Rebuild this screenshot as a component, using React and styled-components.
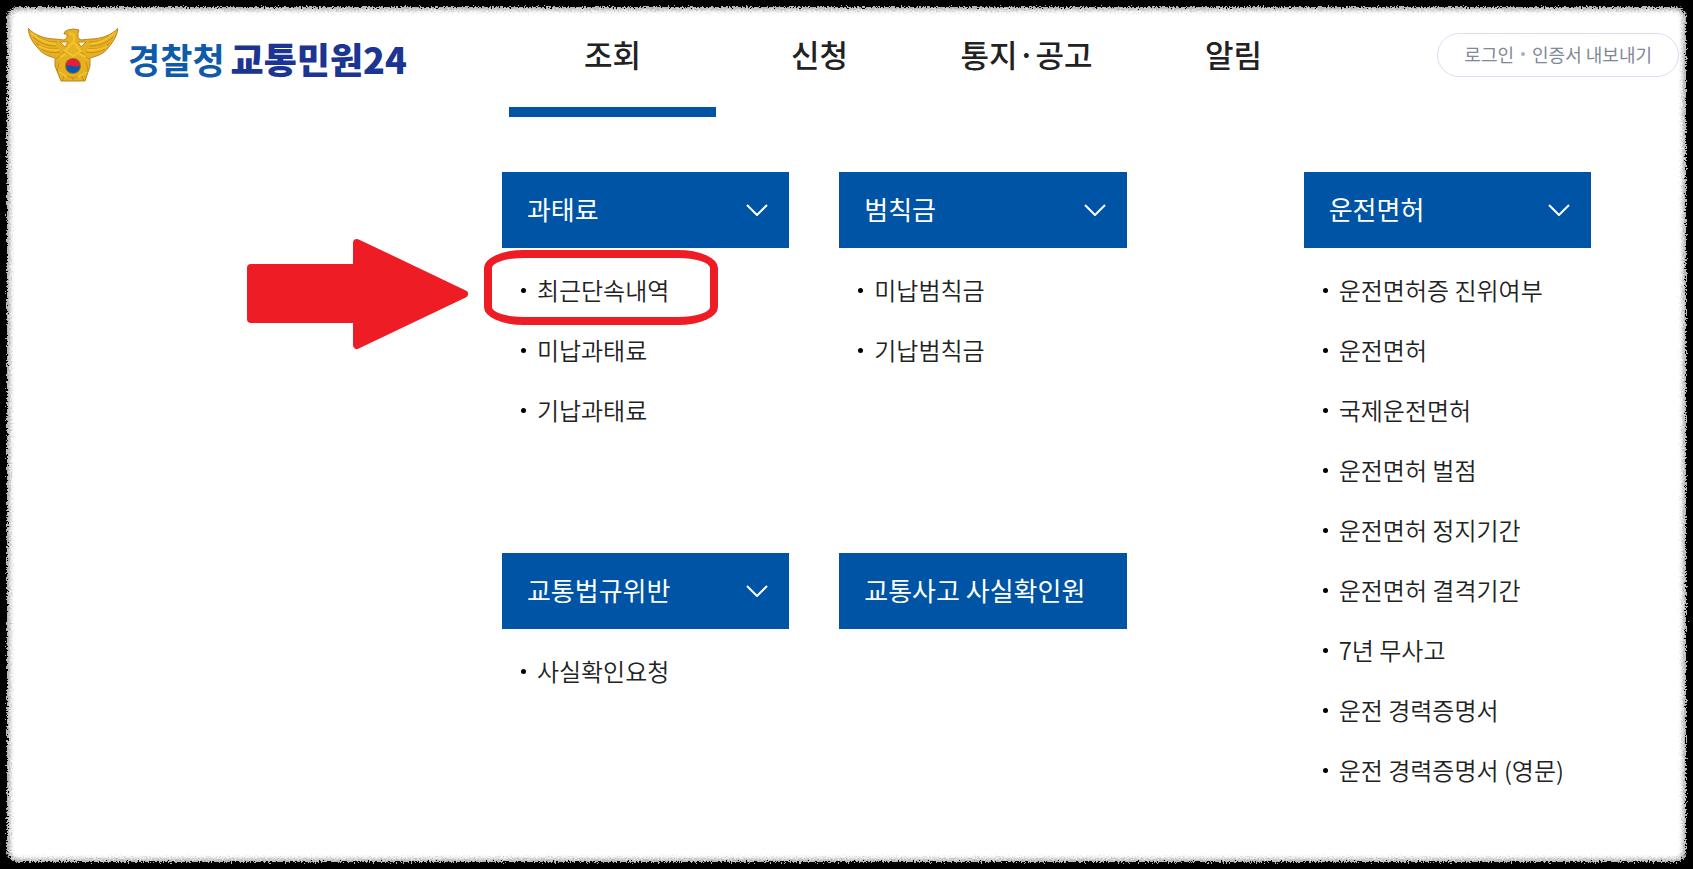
import React from "react"
import styled, { createGlobalStyle } from "styled-components"

const Colors = {
    blue: '#0054a6',
    text: '#222',
    red: '#ee1c24',
    muted: '#808899',
    line: '#dcdff0'
}

const GlobalStyle = createGlobalStyle`
    * {
        box-sizing: border-box;
    }

    body {
        margin: 0;
        background-color: black;
        font-family: 'Noto Sans CJK KR', 'Noto Sans', sans-serif;
        color: ${Colors.text};
    }

    a {
        color: inherit;
        text-decoration: none;
    }

    ul {
        list-style: none;
        margin: 0;
        padding: 0;
    }
`

const Page = styled.div`
    position: relative;
    min-height: 100vh;
    padding: 8px;
    background-color: white;
    overflow: hidden;
`

const RoughFrame = styled.div`
    position: absolute;
    inset: -12px;
    border: 19px solid black;
    border-radius: 30px;
    box-shadow: inset 0 0 4px 3px #aaa;
    filter: url(#rough);
    pointer-events: none;
`

const Header = styled.header`
    display: grid;
    grid-template-columns: 501fr 828fr 348fr;
    height: 109px;
`

const Brand = styled.a`
    display: flex;
    align-items: flex-start;
    gap: 10px;
    padding: 20px 0 0 20px;
    white-space: nowrap;
`

const BrandName = styled.span`
    display: flex;
    align-items: center;
    gap: 6px;
    height: 60px;
    font-size: 35px;
    font-weight: 700;
    color: #0f5aaa;

    strong {
        font-size: 36px;
        color: #1c3492;
    }
`

const Nav = styled.nav`
    display: grid;
    grid-template-columns: repeat(4, 1fr);
`

const NavLink = styled.a`
    display: flex;
    justify-content: center;
    padding-top: 22px;
    border-bottom: 10px solid ${props => props.$active ? Colors.blue : 'transparent'};
    font-size: 31px;
    font-weight: 500;
    line-height: 48px;
    white-space: nowrap;
`

const Utility = styled.div`
    display: flex;
    justify-content: flex-end;
    align-items: flex-start;
    padding: 25px 6px 0 0;
`

const Pill = styled.div`
    display: flex;
    align-items: center;
    gap: 7px;
    height: 44px;
    padding: 0 26px 2px;
    border: 1px solid ${Colors.line};
    border-radius: 22px;
    color: ${Colors.muted};
    font-size: 18px;
    white-space: nowrap;
`

const Dot = styled.i`
    width: 4px;
    height: 4px;
    border-radius: 50%;
    background-color: #a3b1c6;
`

const Menu = styled.main`
    display: flex;
    gap: 177px;
    padding: 55px 5.6% 0 29.45%;
`

const MenuGroup = styled.div`
    display: grid;
    grid-template-columns: repeat(${props => props.$columns}, 1fr);
    grid-template-rows: minmax(331px, auto);
    align-content: start;
    gap: 50px;
    flex: ${props => props.$columns === 2 ? 626 : 288} 1 0;
`

const Toggle = styled.button`
    display: flex;
    justify-content: space-between;
    align-items: center;
    width: 100%;
    height: 76px;
    padding: 0 21px 3px 25px;
    border: 0;
    background-color: ${Colors.blue};
    color: white;
    font-family: inherit;
    font-size: 26px;
    text-align: left;
    white-space: nowrap;
    cursor: pointer;
`

const List = styled.ul`
    padding: 12px 0 0 19px;
`

const Item = styled.li`
    position: relative;
    display: flex;
    align-items: center;
    gap: 11px;
    height: 60px;
    font-size: 24px;
    font-weight: 350;
    white-space: nowrap;

    &::before {
        content: '';
        width: 5px;
        height: 5px;
        border-radius: 50%;
        background-color: black;
    }

    a {
        padding-bottom: 2px;
    }
`

const Highlight = styled.span`
    position: absolute;
    top: -10px;
    left: -37px;
    width: 234px;
    height: 75px;
    border: 8px solid ${Colors.red};
    border-radius: 40px / 18px;
    pointer-events: none;
`

const Arrow = styled.svg`
    position: absolute;
    top: -21px;
    left: -274px;
    fill: ${Colors.red};
    stroke: ${Colors.red};
    stroke-width: 8;
    stroke-linejoin: round;
    pointer-events: none;
`

const navItems = ['조회', '신청', '통지·공고', '알림']

const mainSections = [
    { title: '과태료', items: ['최근단속내역', '미납과태료', '기납과태료'], marked: '최근단속내역' },
    { title: '범칙금', items: ['미납범칙금', '기납범칙금'] },
    { title: '교통법규위반', items: ['사실확인요청'] },
    { title: '교통사고 사실확인원', items: [] }
]

const licenseSection = {
    title: '운전면허',
    items: [
        '운전면허증 진위여부',
        '운전면허',
        '국제운전면허',
        '운전면허 벌점',
        '운전면허 정지기간',
        '운전면허 결격기간',
        '7년 무사고',
        '운전 경력증명서',
        '운전 경력증명서 (영문)'
    ]
}

function RoughFilter() {
    return (
        <svg width="0" height="0" style={{ position: 'absolute' }} aria-hidden="true">
            <filter id="rough" x="0" y="0" width="100%" height="100%">
                <feTurbulence type="fractalNoise" baseFrequency="0.6" numOctaves="2" seed="4" result="noise" />
                <feDisplacementMap in="SourceGraphic" in2="noise" scale="7" xChannelSelector="R" yChannelSelector="G" />
            </filter>
        </svg>
    )
}

function Emblem() {
    return (
        <svg width="90" height="54" viewBox="0 0 90 54" aria-hidden="true">
            <path
                d="M0 0C6 7 17 11 27 11L36 12L39 10L39 6L36 6Q36 3 40 2Q46 0 51 2L50 5V10L53 12L63 11C73 11 84 7 90 0C89 9 84 15 80 20C76 26 69 28 62 30L62 38L57 53H33L27 38V30C20 28 14 26 10 20C5 15 1 9 0 0Z"
                fill="#e5b021" stroke="#bd8424" strokeWidth="1"
            />
            <path d="M32 14L40 14L37 19ZM58 14L50 14L53 19Z" fill="#fff4ce" stroke="#c48b24" />
            <g fill="none" stroke="#c88d1d" strokeWidth="1">
                <path d="M5 9Q14 18 28 18M8 15Q17 22 30 21M13 21Q22 26 32 24M9 8Q19 15 29 14" />
                <path d="M85 9Q76 18 62 18M82 15Q73 22 60 21M77 21Q68 26 58 24M81 8Q71 15 61 14" />
                <path d="M28 31L36 24L44 28L53 24L61 31M31 35L29 43L35 47L45 50L55 47L60 42L58 34M36 48L34 53M45 49V53M54 48L56 53" />
            </g>
            <g fill="none" stroke="#f3c52a" strokeWidth="2">
                <path d="M3 5Q15 15 28 16M11 18Q20 23 31 22M41 5L46 7L46 13" />
                <path d="M87 5Q75 15 62 16M79 18Q70 23 59 22M32 29L38 26M51 26L58 29M31 44L39 49M59 44L50 49" />
                <path d="M37 23L45 14L53 23L45 28Z" fill="#e8b323" />
            </g>
            <circle cx="45" cy="38" r="8" fill="#9c7420" />
            <circle cx="45" cy="38" r="7" fill="#0759ad" />
            <path d="M38 39A7 7 0 1 1 52 37Q50 40 45 38Q40 36 38 39Z" fill="#ed1c36" />
        </svg>
    )
}

function Chevron() {
    return (
        <svg width="22" height="14" viewBox="0 0 22 14" fill="none" stroke="white" strokeWidth="2" aria-hidden="true">
            <path d="M1 3L11 13L21 3" />
        </svg>
    )
}

function PointerArrow() {
    return (
        <Arrow width="221" height="111" viewBox="0 0 221 111" aria-hidden="true">
            <path d="M4 29H110V4L217 55L110 106V80H4Z" />
        </Arrow>
    )
}

function Section({ title, items, marked }) {
    return (
        <section>
            <Toggle type="button">
                {title}
                {items.length > 0 && <Chevron />}
            </Toggle>
            <List>
                {items.map(item => (
                    <Item key={item}>
                        <a href="#">{item}</a>
                        {item === marked && <><Highlight /><PointerArrow /></>}
                    </Item>
                ))}
            </List>
        </section>
    )
}

export default function App() {
    return (
        <Page>
            <GlobalStyle />
            <RoughFilter />
            <Header>
                <Brand href="#">
                    <Emblem />
                    <BrandName>경찰청<strong>교통민원24</strong></BrandName>
                </Brand>
                <Nav>
                    {navItems.map((item, i) => (
                        <NavLink key={item} href="#" $active={i === 0}>{item}</NavLink>
                    ))}
                </Nav>
                <Utility>
                    <Pill>
                        <a href="#">로그인</a>
                        <Dot />
                        <a href="#">인증서 내보내기</a>
                    </Pill>
                </Utility>
            </Header>
            <Menu>
                <MenuGroup $columns={2}>
                    {mainSections.map(section => <Section key={section.title} {...section} />)}
                </MenuGroup>
                <MenuGroup $columns={1}>
                    <Section {...licenseSection} />
                </MenuGroup>
            </Menu>
            <RoughFrame />
        </Page>
    )
}
